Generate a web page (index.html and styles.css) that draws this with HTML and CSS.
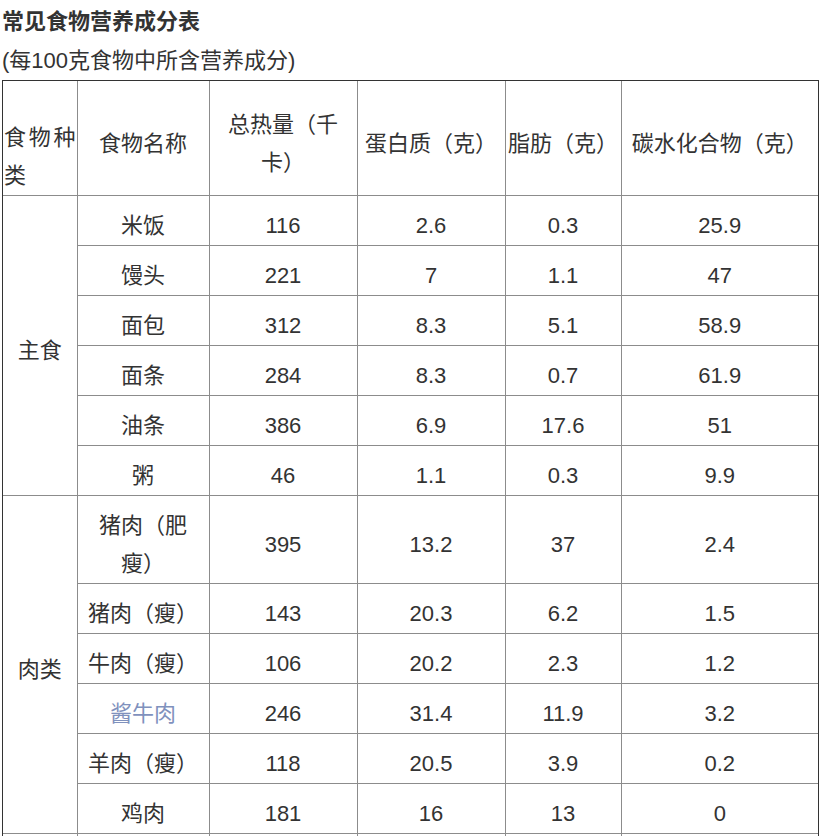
FILE: index.html
```html
<!DOCTYPE html>
<html lang="zh-CN">
<head>
<meta charset="utf-8">
<title>常见食物营养成分表</title>
<link rel="stylesheet" href="styles.css">
</head>
<body>
<div class="page">
  <h1 class="title">常见食物营养成分表</h1>
  <p class="subtitle">(每100克食物中所含营养成分)</p>
  <div class="table-wrap">
    <table class="nutrition">
      <colgroup>
        <col class="c1"><col class="c2"><col class="c3"><col class="c4"><col class="c5"><col class="c6">
      </colgroup>
      <tbody>
        <tr class="head">
          <td class="kind-head">食物种类</td>
          <td>食物名称</td>
          <td>总热量（千卡）</td>
          <td>蛋白质（克）</td>
          <td>脂肪（克）</td>
          <td>碳水化合物（克）</td>
        </tr>
        <tr><td rowspan="6">主食</td><td>米饭</td><td>116</td><td>2.6</td><td>0.3</td><td>25.9</td></tr>
        <tr><td>馒头</td><td>221</td><td>7</td><td>1.1</td><td>47</td></tr>
        <tr><td>面包</td><td>312</td><td>8.3</td><td>5.1</td><td>58.9</td></tr>
        <tr><td>面条</td><td>284</td><td>8.3</td><td>0.7</td><td>61.9</td></tr>
        <tr><td>油条</td><td>386</td><td>6.9</td><td>17.6</td><td>51</td></tr>
        <tr><td>粥</td><td>46</td><td>1.1</td><td>0.3</td><td>9.9</td></tr>
        <tr><td rowspan="6">肉类</td><td>猪肉（肥瘦）</td><td>395</td><td>13.2</td><td>37</td><td>2.4</td></tr>
        <tr><td>猪肉（瘦）</td><td>143</td><td>20.3</td><td>6.2</td><td>1.5</td></tr>
        <tr><td>牛肉（瘦）</td><td>106</td><td>20.2</td><td>2.3</td><td>1.2</td></tr>
        <tr><td><a class="link" href="#">酱牛肉</a></td><td>246</td><td>31.4</td><td>11.9</td><td>3.2</td></tr>
        <tr><td>羊肉（瘦）</td><td>118</td><td>20.5</td><td>3.9</td><td>0.2</td></tr>
        <tr><td>鸡肉</td><td>181</td><td>16</td><td>13</td><td>0</td></tr>
        <tr class="next"><td>&nbsp;</td><td>&nbsp;</td><td>&nbsp;</td><td>&nbsp;</td><td>&nbsp;</td><td>&nbsp;</td></tr>
      </tbody>
    </table>
  </div>
</div>
</body>
</html>
```
FILE: styles.css
```css
html, body {
  margin: 0;
  padding: 0;
  background: #ffffff;
}

body {
  font-family: "Liberation Sans", "Noto Sans CJK SC", sans-serif;
  color: #333333;
  text-spacing-trim: space-all;
}

.page {
  padding: 6px 0 0 2px;
}

.title {
  margin: 0;
  font-size: 22px;
  line-height: 32px;
  font-weight: bold;
  color: #333333;
}

.subtitle {
  margin: 7px 0 0;
  font-size: 22px;
  line-height: 32px;
}

.table-wrap {
  margin-top: 3px;
  width: 815px;
  border: 1px solid #333333;
}

.nutrition {
  width: 815px;
  table-layout: fixed;
  border-collapse: collapse;
  border-style: hidden;
}

.c1 { width: 74px; }
.c2 { width: 132px; }
.c3 { width: 148px; }
.c4 { width: 148px; }
.c5 { width: 116px; }
.c6 { width: 197px; }

.nutrition td {
  border: 1px solid #8c8c8c;
  padding: 11px 2px 0;
  font-size: 22px;
  line-height: 38px;
  text-align: center;
  vertical-align: middle;
  color: #333333;
}

.nutrition .head td {
  height: 103px;
}

.nutrition .head .kind-head {
  text-align: justify;
  text-align-last: left;
  vertical-align: bottom;
  padding-left: 1px;
  padding-right: 1px;
}

.link {
  color: #7f91bd;
  text-decoration: none;
}
```
